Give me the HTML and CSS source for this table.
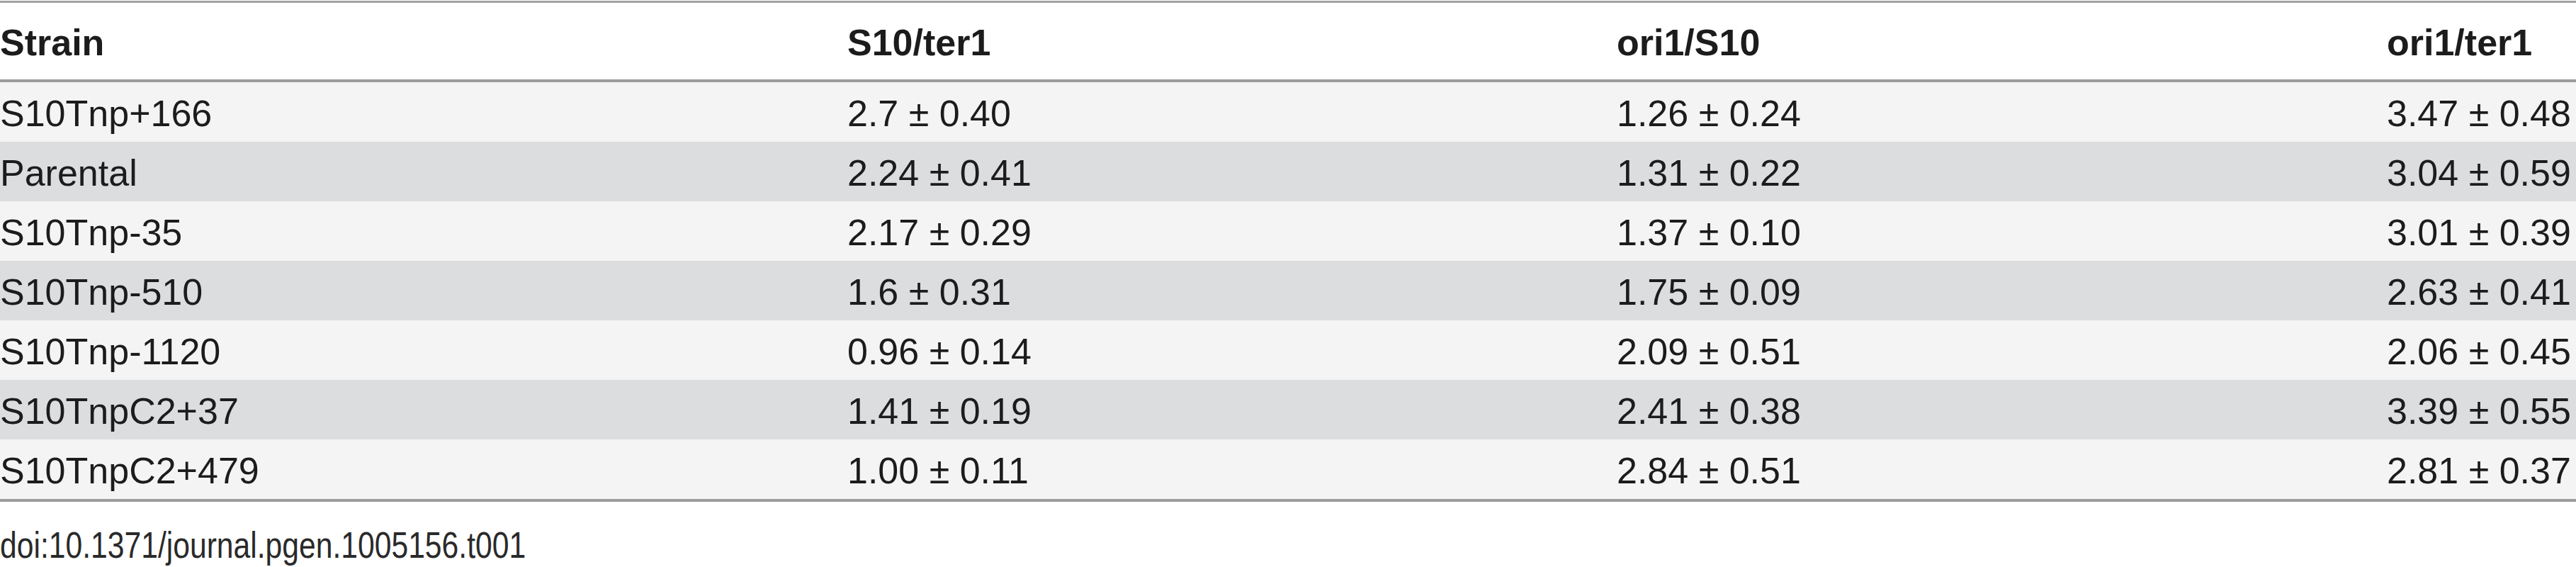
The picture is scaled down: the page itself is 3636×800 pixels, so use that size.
FILE: index.html
```html
<!DOCTYPE html>
<html lang="en">
<head>
<meta charset="utf-8">
<title>Table 1</title>
<link rel="stylesheet" href="styles.css">
</head>
<body>
<div class="page">
  <table class="data">
    <colgroup>
      <col class="c-strain">
      <col class="c-a">
      <col class="c-b">
      <col class="c-c">
    </colgroup>
    <thead>
      <tr>
        <th>Strain</th>
        <th>S10/ter1</th>
        <th>ori1/S10</th>
        <th>ori1/ter1</th>
      </tr>
    </thead>
    <tbody>
      <tr class="light"><td>S10Tnp+166</td><td>2.7 ± 0.40</td><td>1.26 ± 0.24</td><td>3.47 ± 0.48</td></tr>
      <tr class="dark"><td>Parental</td><td>2.24 ± 0.41</td><td>1.31 ± 0.22</td><td>3.04 ± 0.59</td></tr>
      <tr class="light"><td>S10Tnp-35</td><td>2.17 ± 0.29</td><td>1.37 ± 0.10</td><td>3.01 ± 0.39</td></tr>
      <tr class="dark"><td>S10Tnp-510</td><td>1.6 ± 0.31</td><td>1.75 ± 0.09</td><td>2.63 ± 0.41</td></tr>
      <tr class="light"><td>S10Tnp-1120</td><td>0.96 ± 0.14</td><td>2.09 ± 0.51</td><td>2.06 ± 0.45</td></tr>
      <tr class="dark"><td>S10TnpC2+37</td><td>1.41 ± 0.19</td><td>2.41 ± 0.38</td><td>3.39 ± 0.55</td></tr>
      <tr class="light"><td>S10TnpC2+479</td><td>1.00 ± 0.11</td><td>2.84 ± 0.51</td><td>2.81 ± 0.37</td></tr>
    </tbody>
  </table>
  <p class="doi">doi:10.1371/journal.pgen.1005156.t001</p>
</div>
</body>
</html>
```

FILE: styles.css
```css
html, body {
  margin: 0;
  padding: 0;
  background: #ffffff;
}

body {
  font-family: "Liberation Sans", Arial, sans-serif;
  color: #1c1c1c;
  overflow: hidden;
}

.page {
  width: 3636px;
  padding-top: 1px;
}

.data {
  width: 3636px;
  table-layout: fixed;
  border-collapse: separate;
  border-spacing: 0;
  border-top: 3px solid #a2a2a2;
  border-bottom: 4px solid #9c9c9c;
  font-size: 52px;
}

.c-strain { width: 1196px; }
.c-a { width: 1086px; }
.c-b { width: 1087px; }
.c-c { width: 267px; }

.data th {
  text-align: left;
  font-weight: bold;
  height: 104px;
  line-height: 104px;
  padding: 4px 0 0 0;
  border-bottom: 4px solid #9c9c9c;
  background: #ffffff;
  white-space: nowrap;
}

.data td {
  height: 80px;
  line-height: 80px;
  padding: 4px 0 0 0;
  white-space: nowrap;
}

.light td { background: #f4f4f4; }
.dark td { background: #dcdddf; }

.doi {
  margin: 31px 0 0 0;
  font-size: 52px;
  line-height: 60px;
  color: #2a2a2a;
  white-space: nowrap;
  transform: scaleX(0.82);
  transform-origin: left center;
}
```
